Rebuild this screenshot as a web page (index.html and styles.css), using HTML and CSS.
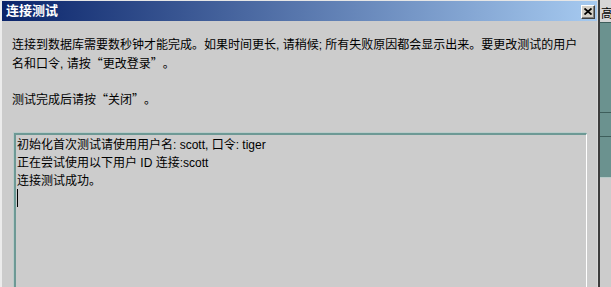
FILE: index.html
```html
<!DOCTYPE html>
<html lang="zh-CN">
<head>
<meta charset="utf-8">
<title>连接测试</title>
<link rel="stylesheet" href="styles.css">
</head>
<body>
<div class="screen">
  <div class="window">
    <div class="titlebar">
      <span class="title">连接测试</span>
      <span class="close" aria-label="关闭">
        <svg width="8" height="7" viewBox="0 0 8 7"><path d="M0.5 0.5 L7.5 6.5 M7.5 0.5 L0.5 6.5" stroke="#000" stroke-width="1.8" fill="none"/></svg>
      </span>
    </div>
    <div class="content">
      <div class="intro">
        <div class="line">连接到数据库需要数秒钟才能完成。如果时间更长, 请稍候; 所有失败原因都会显示出来。要更改测试的用户</div>
        <div class="line">名和口令, 请按<span class="q">“</span>更改登录<span class="q">”</span>。</div>
        <div class="line blank">&nbsp;</div>
        <div class="line">测试完成后请按<span class="q">“</span>关闭<span class="q">”</span>。</div>
      </div>
      <div class="output">
        <div class="line">初始化首次测试请使用用户名: scott, 口令: tiger</div>
        <div class="line">正在尝试使用以下用户 ID 连接:scott</div>
        <div class="line">连接测试成功。</div>
        <div class="line"><span class="caret"></span></div>
      </div>
    </div>
  </div>
  <div class="divider"></div>
  <div class="side">
    <div class="side-top">高</div>
    <div class="side-teal">
      <div class="side-band"></div>
      <div class="side-band2"></div>
    </div>
    <div class="side-rest"></div>
  </div>
</div>
</body>
</html>
```

FILE: styles.css
```css
html, body {
  margin: 0;
  padding: 0;
  background: #cccccc;
}
.screen {
  width: 611px;
  height: 287px;
  overflow: hidden;
  display: flex;
  font-family: "Liberation Sans", "Noto Sans CJK SC", sans-serif;
  font-size: 12px;
  color: #000;
}
.window {
  width: 598px;
  height: 287px;
  box-sizing: border-box;
  background: #cccccc;
  border-left: 2px solid #ececec;
  border-top: 1px solid #e6e6e6;
  border-right: 1px solid #d8d8d8;
  display: flex;
  flex-direction: column;
  flex: none;
}
.titlebar {
  height: 20px;
  flex: none;
  background: linear-gradient(to right, #0a246a 0%, #a6caf0 100%);
  display: flex;
  align-items: center;
  padding-left: 4px;
  padding-right: 2px;
}
.title {
  color: #fff;
  font-weight: bold;
  font-size: 13px;
  line-height: 20px;
  flex: 1;
}
.close {
  width: 14px;
  height: 14px;
  box-sizing: border-box;
  background: #d4d0c8;
  border-top: 1px solid #ffffff;
  border-left: 1px solid #ffffff;
  border-right: 1px solid #404040;
  border-bottom: 1px solid #404040;
  box-shadow: inset -1px -1px 0 #808080;
  display: flex;
  align-items: center;
  justify-content: center;
  margin-top: 1px;
}
.content {
  flex: 1;
  padding-left: 10px;
  padding-top: 15px;
}
.line {
  line-height: 18px;
  height: 18px;
  white-space: nowrap;
}
.q {
  font-family: "Noto Sans CJK SC", sans-serif;
  display: inline-block;
  width: 12px;
  text-align: center;
}
.output {
  margin-top: 25px;
  margin-left: 2px;
  width: 573px;
  height: 200px;
  box-sizing: border-box;
  border-top: 2px solid #6d9995;
  border-left: 2px solid #6d9995;
  border-right: 1px solid #ffffff;
  box-shadow: -1px -1px 0 #b9cbc9;
  padding-top: 1px;
  padding-left: 1px;
}
.caret {
  display: inline-block;
  width: 1px;
  height: 18px;
  background: #000;
  vertical-align: top;
  margin-top: -1px;
}
.divider {
  width: 2px;
  height: 287px;
  background: #3c3c3c;
  flex: none;
}
.side {
  width: 11px;
  flex: none;
  display: flex;
  flex-direction: column;
}
.side-top {
  height: 22px;
  background: #d6d6d6;
  border-bottom: 1px solid #3e5e5b;
  font-size: 12px;
  line-height: 26px;
  padding-left: 1px;
  overflow: hidden;
  font-family: "Noto Sans CJK SC", sans-serif;
}
.side-teal {
  height: 154px;
  background: #6b928f;
  display: flex;
  flex-direction: column;
}
.side-band {
  margin-top: 89px;
  height: 1px;
  background: #3e5e5b;
}
.side-band2 {
  margin-top: 23px;
  height: 1px;
  background: #3e5e5b;
}
.side-rest {
  flex: 1;
  background: #cccccc;
  border-top: 1px solid #b7c9c7;
}
```
